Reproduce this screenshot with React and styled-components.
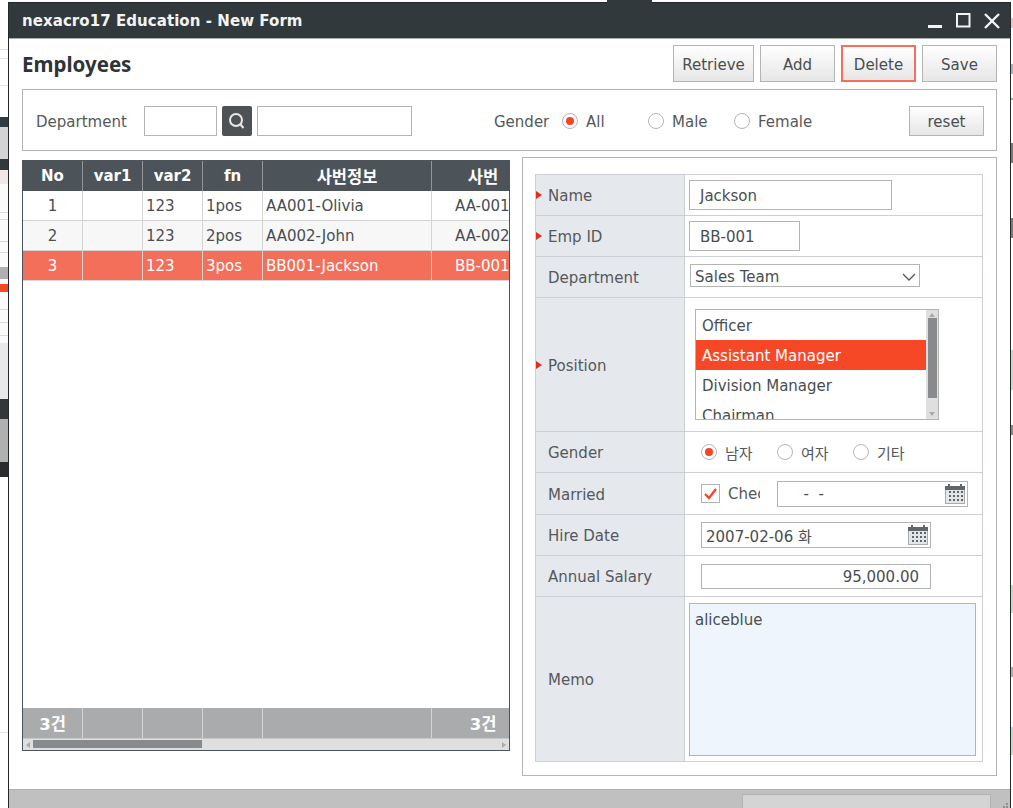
import React from 'react';
import styled, {createGlobalStyle} from 'styled-components';

const GlobalStyle = createGlobalStyle`
  html, body {
    margin: 0;
    padding: 0;
    background: #fff;
    overflow: hidden;
  }
  body, button, input {
    font-family: "DejaVu Sans", "Noto Sans CJK KR", sans-serif;
  }
`;

const Page = styled.div`
  position: relative;
  display: flex;
  width: 1013px;
  height: 808px;
  overflow: hidden;
`;

const TopNotch = styled.div`
  position: absolute;
  left: 607px;
  top: 0;
  width: 45px;
  height: 3px;
  background: #32393c;
`;

const Strip = styled.div`
  display: flex;
  flex-direction: column;
  width: ${(p) => p.$w}px;
  flex: none;
`;

const StripPart = styled.div`
  height: ${(p) => p.$h}px;
  background: ${(p) => p.$c};
  flex: none;
`;

const Window = styled.div`
  width: 1003px;
  flex: none;
  margin-top: 2px;
  height: 806px;
  box-sizing: border-box;
  border: 1px solid #23282a;
  border-width: 1px 1px 0 1px;
  display: flex;
  flex-direction: column;
  background: #fff;
`;

const TitleBar = styled.div`
  height: 35px;
  flex: none;
  background: #32393c;
  border-bottom: 1px solid #aab0b2;
  display: flex;
  align-items: center;
  justify-content: space-between;
  padding: 0 10px 0 13px;
  color: #f2f4f4;
`;

const TitleText = styled.span`
  padding-top: 1px;
  font-size: 15px;
  font-weight: 700;
  letter-spacing: 0.06px;
`;

const WindowIcons = styled.div`
  display: flex;
  align-items: center;
  gap: 13px;
`;

const Content = styled.div`
  flex: 1;
  padding: 6px 13px 0 13px;
  display: flex;
  flex-direction: column;
`;

const HeaderRow = styled.div`
  display: flex;
  align-items: center;
  justify-content: space-between;
  height: 37px;
  flex: none;
`;

const Heading = styled.h1`
  margin: 0;
  font-family: "Noto Sans", sans-serif;
  font-size: 20.5px;
  font-weight: 700;
  color: #2f3336;
`;

const ButtonRow = styled.div`
  display: flex;
  gap: 6px;
`;

const Btn = styled.button`
  width: ${(p) => p.$w}px;
  height: ${(p) => p.$h || 37}px;
  box-sizing: border-box;
  padding: 2px 0 0;
  border: 1px solid #b4b4b4;
  background: linear-gradient(#ffffff, #e6e6e6);
  color: #4a4e51;
  font-size: 15px;
`;

const DangerBtn = styled(Btn)`
  border: 2px solid #f4705c;
`;

const SearchBox = styled.div`
  height: 62px;
  margin-top: 7px;
  flex: none;
  box-sizing: border-box;
  border: 1px solid #b4b4b4;
  display: flex;
  align-items: center;
  padding: 2px 12px 0 13px;
  color: #55595c;
  font-size: 15px;
`;

const SearchLabel = styled.span`
  width: ${(p) => p.$w}px;
  flex: none;
  padding-top: 1px;
  color: #55595c;
`;

const Input = styled.div`
  box-sizing: border-box;
  width: ${(p) => p.$w}px;
  height: ${(p) => p.$h || 30}px;
  flex: none;
  margin-right: ${(p) => p.$mr || 0}px;
  border: 1px solid #b4b4b4;
  background: #fff;
  display: flex;
  align-items: center;
  justify-content: ${(p) => (p.$right ? 'flex-end' : 'flex-start')};
  padding: ${(p) => (p.$right ? '2px 11px 0 0' : '2px 0 0 ' + (p.$pl ?? 10) + 'px')};
  color: #4a4e51;
  font-size: 15px;
`;

const SearchBtn = styled.div`
  box-sizing: border-box;
  width: 30px;
  height: 30px;
  flex: none;
  margin-right: 5px;
  border-radius: 2px;
  background: #4f5254;
  display: flex;
  align-items: center;
  justify-content: center;
`;

const RadioItem = styled.span`
  display: inline-flex;
  align-items: center;
  width: ${(p) => p.$w}px;
  flex: none;
  gap: 8px;
  color: #55595c;
  font-size: 15px;
`;

const RadioText = styled.span`
  padding-top: 1px;
`;

const RadioDot = styled.span`
  box-sizing: border-box;
  width: 16px;
  height: 16px;
  flex: none;
  border-radius: 50%;
  border: 1px solid #b5b5b5;
  background: #fff;
  display: flex;
  align-items: center;
  justify-content: center;
  &::after {
    content: '';
    display: ${(p) => (p.$on ? 'block' : 'none')};
    width: 8px;
    height: 8px;
    border-radius: 50%;
    background: #f44327;
  }
`;

const Spacer = styled.div`
  flex: 1;
`;

const Main = styled.div`
  display: flex;
  align-items: flex-start;
  justify-content: space-between;
  margin-top: 6px;
`;

const Grid = styled.div`
  width: 488px;
  height: 591px;
  margin-top: 3px;
  box-sizing: border-box;
  border: 1px solid #4c5459;
  display: flex;
  flex-direction: column;
  overflow: hidden;
`;

const GridCell = styled.div`
  box-sizing: border-box;
  display: flex;
  align-items: center;
  justify-content: ${(p) => (p.$center ? 'center' : 'flex-start')};
  padding-left: ${(p) => (p.$center ? 0 : p.$pl ?? 3)}px;
  border-right: 1px solid ${(p) => p.$line || '#d4d4d4'};
  font-size: ${(p) => p.$size || 15}px;
  font-weight: ${(p) => (p.$bold ? 700 : 400)};
  white-space: nowrap;
  overflow: hidden;
  &:last-child {
    border-right: none;
  }
`;

const GridRow = styled.div`
  display: grid;
  grid-template-columns: 60px 60px 60px 60px 169px 102px;
  height: ${(p) => p.$h || 30}px;
  flex: none;
  box-sizing: border-box;
  border-bottom: ${(p) => (p.$noline ? 'none' : '1px solid #d4d4d4')};
  background: ${(p) => p.$bg || '#fff'};
  color: ${(p) => p.$fg || '#4a4e51'};
`;

const GridBody = styled.div`
  flex: 1;
  background: #fff;
`;

const HScroll = styled.div`
  height: 12px;
  box-sizing: border-box;
  border-top: 1px solid #c8c8c8;
  flex: none;
  background: #dfdfdf;
  display: flex;
  align-items: center;
  justify-content: space-between;
  padding: 0 3px;
`;

const HThumb = styled.div`
  position: absolute;
  left: 10px;
  top: 2px;
  width: 169px;
  height: 8px;
  background: #878b8e;
`;

const HScrollWrap = styled.div`
  position: relative;
  flex: none;
`;

const Arrow = styled.span`
  width: 0;
  height: 0;
  border-top: 3px solid transparent;
  border-bottom: 3px solid transparent;
  ${(p) => (p.$left ? 'border-right: 4px solid #aaa;' : 'border-left: 4px solid #aaa;')}
`;

const Panel = styled.div`
  width: 475px;
  height: 619px;
  box-sizing: border-box;
  border: 1px solid #b4b4b4;
  padding: 16px 13px 13px 12px;
`;

const FormTable = styled.div`
  display: grid;
  grid-template-columns: 149px 1fr;
  border: 1px solid #ccd0d6;
`;

const FormLabel = styled.div`
  position: relative;
  height: ${(p) => p.$h}px;
  box-sizing: border-box;
  background: #e5e8ed;
  border-right: 1px solid #ccd0d6;
  border-bottom: ${(p) => (p.$last ? 'none' : '1px solid #ccd0d6')};
  display: flex;
  align-items: center;
  padding: 2px 0 0 12px;
  color: #55595c;
  font-size: 15px;
  ${(p) =>
    p.$required &&
    `&::before {
      content: '';
      position: absolute;
      left: 0;
      top: 50%;
      margin-top: -4px;
      border-left: 6px solid #e0301a;
      border-top: 4px solid transparent;
      border-bottom: 4px solid transparent;
    }`}
`;

const FormValue = styled.div`
  height: ${(p) => p.$h}px;
  box-sizing: border-box;
  border-bottom: ${(p) => (p.$last ? 'none' : '1px solid #ccd0d6')};
  display: flex;
  align-items: center;
  padding-left: ${(p) => p.$pl ?? 4}px;
`;

const SelectBox = styled.div`
  box-sizing: border-box;
  width: 230px;
  height: 23px;
  margin-left: 1px;
  margin-top: -3px;
  border: 1px solid #b4b4b4;
  display: flex;
  align-items: center;
  justify-content: space-between;
  padding: 2px 3px 0 4px;
  color: #4a4e51;
  font-size: 15px;
`;

const ListBox = styled.div`
  box-sizing: border-box;
  width: 244px;
  height: 111px;
  margin-left: 6px;
  margin-top: -1px;
  border: 1px solid #b4b4b4;
  display: flex;
  overflow: hidden;
`;

const ListItems = styled.div`
  flex: 1;
  overflow: hidden;
`;

const ListItem = styled.div`
  height: 30px;
  box-sizing: border-box;
  display: flex;
  align-items: center;
  padding: 2px 0 0 6px;
  background: ${(p) => (p.$on ? '#f64826' : '#fff')};
  color: ${(p) => (p.$on ? '#fff' : '#4a4e51')};
  font-size: 15px;
`;

const VScroll = styled.div`
  width: 12px;
  flex: none;
  background: #dfdfdf;
  display: flex;
  flex-direction: column;
  align-items: center;
  justify-content: space-between;
  padding: 3px 0;
  box-sizing: border-box;
`;

const VThumb = styled.div`
  width: 9px;
  height: 80px;
  background: #878b8e;
  margin-bottom: 12px;
`;

const ArrowV = styled.span`
  width: 0;
  height: 0;
  border-left: 3px solid transparent;
  border-right: 3px solid transparent;
  ${(p) => (p.$up ? 'border-bottom: 4px solid #aaa;' : 'border-top: 4px solid #aaa;')}
`;

const GenderRow = styled.div`
  display: flex;
  margin-left: 12px;
`;

const CheckBox = styled.span`
  box-sizing: border-box;
  width: 19px;
  height: 19px;
  flex: none;
  margin-left: 12px;
  border: 1px solid #b4b4b4;
  display: flex;
  align-items: center;
  justify-content: center;
`;

const CheckLabel = styled.span`
  width: 32px;
  margin-left: 8px;
  margin-right: 17px;
  overflow: hidden;
  white-space: nowrap;
  color: #55595c;
  font-size: 15px;
`;

const DateField = styled.div`
  box-sizing: border-box;
  width: ${(p) => p.$w}px;
  height: 26px;
  margin-left: ${(p) => p.$ml || 0}px;
  border: 1px solid #b4b4b4;
  display: flex;
  align-items: center;
  justify-content: space-between;
  padding: 0 1px 0 ${(p) => p.$pl || 4}px;
  color: #4a4e51;
  font-size: 15px;
  white-space: pre;
`;

const Memo = styled.div`
  box-sizing: border-box;
  width: 287px;
  height: 153px;
  border: 1px solid #b4b4b4;
  background: #eef5fd;
  padding: 7px 5px;
  color: #4a4e51;
  font-size: 15px;
`;

const StatusBar = styled.div`
  height: 19px;
  flex: none;
  background: #c0c0c0;
  border-top: 1px solid #aeaeae;
  display: flex;
  justify-content: flex-end;
  align-items: flex-start;
  gap: 9px;
  padding-right: 1px;
  box-sizing: border-box;
`;

const StatusField = styled.div`
  box-sizing: border-box;
  width: 249px;
  height: 20px;
  margin-top: 4px;
  background: #d4d4d4;
  border: 1px solid #b2b2b2;
`;

const Grip = styled.svg`
  margin-top: 13px;
  flex: none;
`;

const CalendarIcon = () => (
  <svg width="22" height="20" viewBox="0 0 22 20">
    <rect x="1.5" y="3.5" width="19" height="16" fill="#e3e6e8" stroke="#a8acae" />
    <rect x="1" y="2" width="20" height="4" fill="#60666a" />
    <rect x="4" y="0" width="2" height="4" fill="#60666a" />
    <rect x="16" y="0" width="2" height="4" fill="#60666a" />
    {[8, 12, 16].map((y) =>
      [5, 9, 13, 17].map((x) => <rect key={x + '-' + y} x={x} y={y - 1} width="2" height="2" fill="#5f6568" />),
    )}
  </svg>
);

const columns = [
  {label: 'No'},
  {label: 'var1'},
  {label: 'var2'},
  {label: 'fn'},
  {label: '사번정보', size: 16.5},
  {label: '사번', size: 16.5},
];
const rows = [
  ['1', '', '123', '1pos', 'AA001-Olivia', 'AA-001'],
  ['2', '', '123', '2pos', 'AA002-John', 'AA-002'],
  ['3', '', '123', '3pos', 'BB001-Jackson', 'BB-001'],
];
const leftStrip = [
  [49, '#fff'], [1, '#e4e4e4'], [8, '#fff'], [1, '#e4e4e4'], [26, '#fff'], [1, '#e4e4e4'], [31, '#fff'],
  [10, '#2f3a45'], [32, '#d3d3d5'], [11, '#33383c'], [14, '#f3e6e6'], [28, '#fafafa'], [1, '#d8d8d8'],
  [6, '#fafafa'], [1, '#d8d8d8'], [21, '#fafafa'], [1, '#d8d8d8'], [10, '#fafafa'], [1, '#d8d8d8'],
  [14, '#fafafa'], [12, '#b0b0b0'], [5, '#fafafa'], [8, '#f44a25'], [17, '#fafafa'], [1, '#d8d8d8'],
  [12, '#fafafa'], [1, '#d8d8d8'], [12, '#fafafa'], [1, '#d8d8d8'], [7, '#fafafa'], [56, '#e8e8ea'],
  [20, '#33363a'], [43, '#b0b0b0'], [15, '#2a2c2e'], [255, '#fff'], [1, '#e4e4e4'], [74, '#fff'],
];
const rightStrip = [
  [18, '#fff'], [10, '#e8c8c8'], [36, '#fff'], [10, '#a8b2ba'], [24, '#fff'], [2, '#8db98d'], [43, '#fff'],
  [20, '#7a7a7a'], [55, '#fff'], [20, '#7a7a7a'], [112, '#fff'], [40, '#c4dcc4'], [35, '#fff'], [10, '#8a8a8a'],
  [150, '#fff'], [28, '#c4dcc4'], [54, '#fff'], [10, '#b0b0b0'], [50, '#fff'], [28, '#c4dcc4'], [53, '#fff'],
];

const App = () => {
  return (
    <Page>
      <GlobalStyle />
      <TopNotch />
      <Strip $w={8}>
        {leftStrip.map(([h, c], i) => <StripPart key={i} $h={h} $c={c} />)}
      </Strip>
      <Window>
        <TitleBar>
          <TitleText>nexacro17 Education - New Form</TitleText>
          <WindowIcons>
            <svg width="15" height="15" viewBox="0 0 15 15"><rect x="0" y="12" width="14" height="3" fill="#f2f4f4" /></svg>
            <svg width="15" height="15" viewBox="0 0 15 15"><rect x="1" y="1" width="12.5" height="12.5" fill="none" stroke="#f2f4f4" strokeWidth="2" /></svg>
            <svg width="16" height="16" viewBox="0 0 16 16"><path d="M1 1 L15 15 M15 1 L1 15" stroke="#f2f4f4" strokeWidth="2.4" /></svg>
          </WindowIcons>
        </TitleBar>
        <Content>
          <HeaderRow>
            <Heading>Employees</Heading>
            <ButtonRow>
              <Btn $w={81}>Retrieve</Btn>
              <Btn $w={75}>Add</Btn>
              <DangerBtn $w={75}>Delete</DangerBtn>
              <Btn $w={75}>Save</Btn>
            </ButtonRow>
          </HeaderRow>
          <SearchBox>
            <SearchLabel $w={108}>Department</SearchLabel>
            <Input $w={73} $mr={5} />
            <SearchBtn>
              <svg width="18" height="18" viewBox="0 0 18 18">
                <circle cx="8" cy="8" r="6" fill="none" stroke="#e8e8e8" strokeWidth="2" />
                <path d="M12.5 12.5 L15.5 16" stroke="#e8e8e8" strokeWidth="2" />
              </svg>
            </SearchBtn>
            <Input $w={155} $mr={82} />
            <SearchLabel $w={68}>Gender</SearchLabel>
            <RadioItem $w={86}><RadioDot $on /><RadioText>All</RadioText></RadioItem>
            <RadioItem $w={86}><RadioDot /><RadioText>Male</RadioText></RadioItem>
            <RadioItem $w={86}><RadioDot /><RadioText>Female</RadioText></RadioItem>
            <Spacer />
            <Btn $w={75} $h={30}>reset</Btn>
          </SearchBox>
          <Main>
            <Grid>
              <GridRow $bg="#4c5459" $fg="#fff" $noline>
                {columns.map((c) => <GridCell key={c.label} $center $bold $size={c.size} $line="#8f9599">{c.label}</GridCell>)}
              </GridRow>
              {rows.map((r, i) => (
                <GridRow key={r[0]} $bg={i === 2 ? '#f36f5a' : i === 1 ? '#f7f7f7' : '#fff'} $fg={i === 2 ? '#fff' : '#4a4e51'}>
                  <GridCell $center>{r[0]}</GridCell>
                  <GridCell />
                  <GridCell>{r[2]}</GridCell>
                  <GridCell>{r[3]}</GridCell>
                  <GridCell>{r[4]}</GridCell>
                  <GridCell $pl={23}>{r[5]}</GridCell>
                </GridRow>
              ))}
              <GridBody />
              <GridRow $bg="#aaabac" $fg="#fff" $noline>
                <GridCell $center $bold $size={16.5}>3건</GridCell>
                <GridCell /><GridCell /><GridCell /><GridCell />
                <GridCell $center $bold $size={16.5}>3건</GridCell>
              </GridRow>
              <HScrollWrap>
                <HScroll><Arrow $left /><Arrow /></HScroll>
                <HThumb />
              </HScrollWrap>
            </Grid>
            <Panel>
              <FormTable>
                <FormLabel $h={41} $required>Name</FormLabel>
                <FormValue $h={41}><Input $w={203}>Jackson</Input></FormValue>
                <FormLabel $h={41} $required>Emp ID</FormLabel>
                <FormValue $h={41}><Input $w={111}>BB-001</Input></FormValue>
                <FormLabel $h={41}>Department</FormLabel>
                <FormValue $h={41}>
                  <SelectBox>
                    Sales Team
                    <svg width="14" height="8" viewBox="0 0 14 8"><path d="M1 1 L7 7 L13 1" fill="none" stroke="#555" strokeWidth="1.3" /></svg>
                  </SelectBox>
                </FormValue>
                <FormLabel $h={134} $required>Position</FormLabel>
                <FormValue $h={134}>
                  <ListBox>
                    <ListItems>
                      <ListItem>Officer</ListItem>
                      <ListItem $on>Assistant Manager</ListItem>
                      <ListItem>Division Manager</ListItem>
                      <ListItem>Chairman</ListItem>
                    </ListItems>
                    <VScroll><ArrowV $up /><VThumb /><ArrowV /></VScroll>
                  </ListBox>
                </FormValue>
                <FormLabel $h={41}>Gender</FormLabel>
                <FormValue $h={41}>
                  <GenderRow>
                    <RadioItem $w={76}><RadioDot $on />남자</RadioItem>
                    <RadioItem $w={76}><RadioDot />여자</RadioItem>
                    <RadioItem $w={76}><RadioDot />기타</RadioItem>
                  </GenderRow>
                </FormValue>
                <FormLabel $h={42}>Married</FormLabel>
                <FormValue $h={42}>
                  <CheckBox>
                    <svg width="15" height="13" viewBox="0 0 15 13"><path d="M2 7 L6 11 L13 2" fill="none" stroke="#f44327" strokeWidth="2.2" /></svg>
                  </CheckBox>
                  <CheckLabel>Check</CheckLabel>
                  <DateField $w={191} $pl={16}>{'  -  -'}<CalendarIcon /></DateField>
                </FormValue>
                <FormLabel $h={41}>Hire Date</FormLabel>
                <FormValue $h={41}>
                  <DateField $w={230} $ml={12}>2007-02-06 화<CalendarIcon /></DateField>
                </FormValue>
                <FormLabel $h={41}>Annual Salary</FormLabel>
                <FormValue $h={41} $pl={16}>
                  <Input $w={230} $h={25} $right>95,000.00</Input>
                </FormValue>
                <FormLabel $h={164} $last>Memo</FormLabel>
                <FormValue $h={164} $last>
                  <Memo>aliceblue</Memo>
                </FormValue>
              </FormTable>
            </Panel>
          </Main>
        </Content>
        <StatusBar>
          <StatusField />
          <Grip width="9" height="6" viewBox="0 0 9 6">
            <rect x="6" y="0" width="2" height="2" fill="#8f8f8f" />
            <rect x="3" y="3" width="2" height="2" fill="#8f8f8f" />
            <rect x="6" y="3" width="2" height="2" fill="#8f8f8f" />
          </Grip>
        </StatusBar>
      </Window>
      <Strip $w={2}>
        {rightStrip.map(([h, c], i) => <StripPart key={i} $h={h} $c={c} />)}
      </Strip>
    </Page>
  );
};

export default App;
